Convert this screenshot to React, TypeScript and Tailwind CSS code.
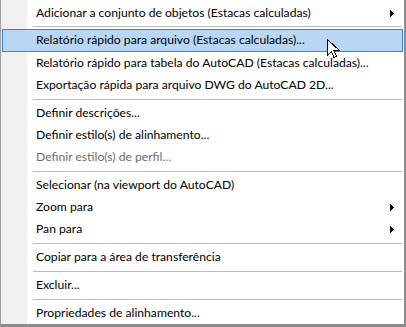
type Item =
  | { kind: "sep"; h?: string }
  | { kind: "item"; label: string; sub?: boolean; disabled?: boolean; hot?: boolean };

const items: Item[] = [
  { kind: "item", label: "Adicionar a conjunto de objetos (Estacas calculadas)", sub: true },
  { kind: "sep", h: "h-[5px]" },
  { kind: "item", label: "Relatório rápido para arquivo (Estacas calculadas)...", hot: true },
  { kind: "item", label: "Relatório rápido para tabela do AutoCAD (Estacas calculadas)..." },
  { kind: "item", label: "Exportação rápida para arquivo DWG do AutoCAD 2D..." },
  { kind: "sep" },
  { kind: "item", label: "Definir descrições..." },
  { kind: "item", label: "Definir estilo(s) de alinhamento..." },
  { kind: "item", label: "Definir estilo(s) de perfil...", disabled: true },
  { kind: "sep" },
  { kind: "item", label: "Selecionar (na viewport do AutoCAD)" },
  { kind: "item", label: "Zoom para", sub: true },
  { kind: "item", label: "Pan para", sub: true },
  { kind: "sep" },
  { kind: "item", label: "Copiar para a área de transferência" },
  { kind: "sep" },
  { kind: "item", label: "Excluir..." },
  { kind: "sep" },
  { kind: "item", label: "Propriedades de alinhamento..." },
];

function SubArrow() {
  return (
    <svg width="4" height="7" viewBox="0 0 4 7" shapeRendering="crispEdges">
      <path d="M0 0 L4 3.5 L0 7 Z" fill="#000" />
    </svg>
  );
}

function Cursor() {
  return (
    <svg
      className="absolute left-[327px] top-[39px]"
      width="13"
      height="21"
      viewBox="0 0 13 21"
      shapeRendering="crispEdges"
    >
      <path
        d="M0.5 0.5 L0.5 16.5 L4.5 12.5 L7 18.5 L9.5 17.5 L7 11.5 L12.5 11.5 Z"
        fill="#fff"
        stroke="#000"
        strokeWidth="1"
        strokeLinejoin="miter"
      />
    </svg>
  );
}

export default function App() {
  return (
    <div className="relative w-[406px] h-[327px] overflow-hidden">
      <div className="flex flex-col h-full pt-[2px] border-l border-l-[#a0a0a0] border-r-2 border-r-[#8c8c8c] border-b-[3px] border-b-[#8c8c8c] bg-[linear-gradient(to_right,#f0f0f0_26px,#ffffff_26px)] font-['Lato',sans-serif] text-[12.15px] text-black">
        {items.map((it, i) => {
          if (it.kind === "sep") {
            return (
              <div key={i} className={`flex items-center ${it.h ?? "h-[6px]"}`}>
                <div className="ml-[32px] mr-[2px] h-px flex-1 bg-[#bcbcbc]" />
              </div>
            );
          }
          if (it.hot) {
            return (
              <div
                key={i}
                className="mx-px flex h-[23px] items-center border border-[#2f86dc] bg-[#b8d7f4] pl-[33px] pr-[9px] whitespace-nowrap"
              >
                {it.label}
              </div>
            );
          }
          return (
            <div
              key={i}
              className={`flex h-[22px] items-center justify-between pl-[35px] pr-[10px] whitespace-nowrap ${
                it.disabled ? "text-[#6d6d6d]" : ""
              }`}
            >
              <span>{it.label}</span>
              {it.sub && <SubArrow />}
            </div>
          );
        })}
      </div>
      <Cursor />
    </div>
  );
}
